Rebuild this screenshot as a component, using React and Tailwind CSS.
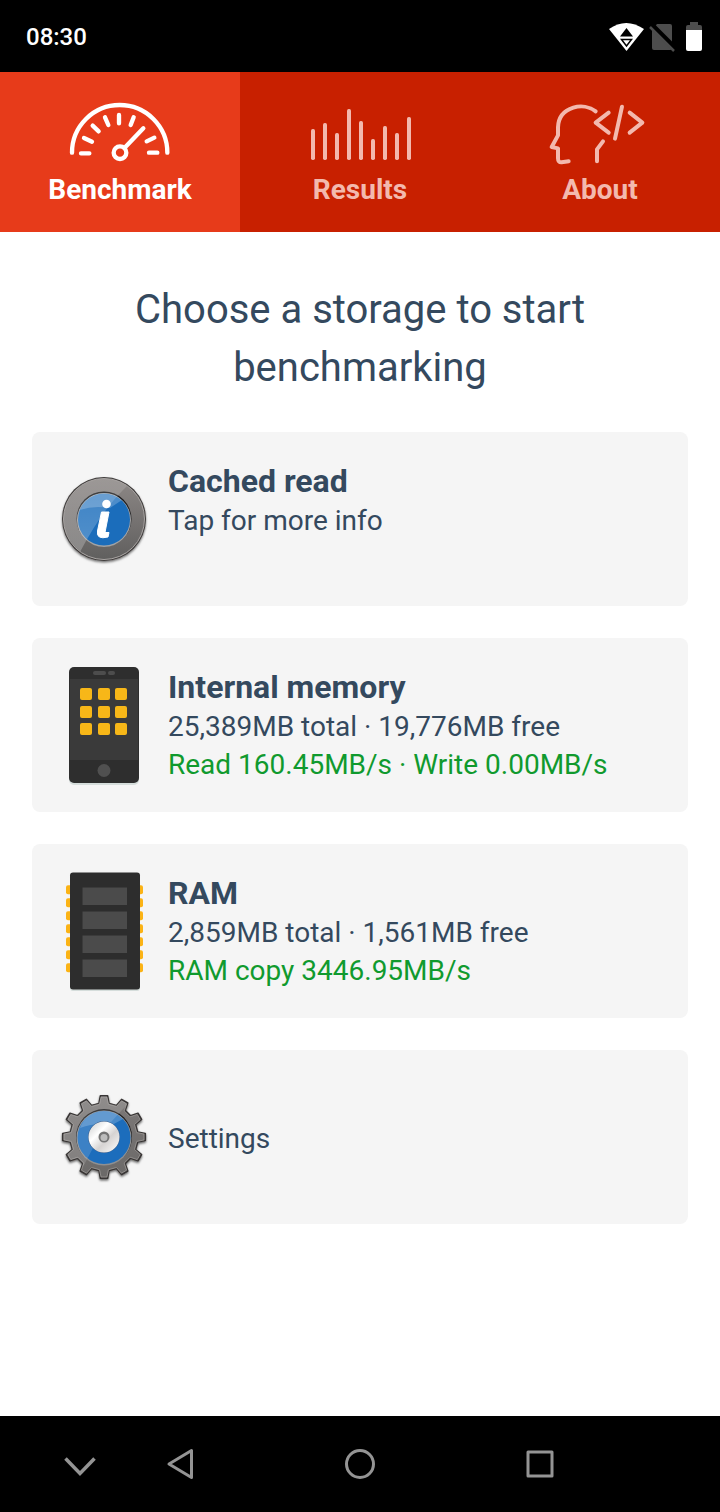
import React, { useState } from 'react';

const tabs = [
  { id: 'benchmark', label: 'Benchmark', icon: GaugeIcon },
  { id: 'results', label: 'Results', icon: BarsIcon },
  { id: 'about', label: 'About', icon: HeadIcon },
];

const storages = [
  { title: 'Cached read', info: 'Tap for more info', icon: InfoIcon },
  {
    title: 'Internal memory',
    info: '25,389MB total · 19,776MB free',
    result: 'Read 160.45MB/s · Write 0.00MB/s',
    icon: PhoneIcon,
  },
  {
    title: 'RAM',
    info: '2,859MB total · 1,561MB free',
    result: 'RAM copy 3446.95MB/s',
    icon: ChipIcon,
  },
];

const barTops = [117, 99, 129, 57, 93, 147, 108, 129, 81];

function GaugeIcon() {
  return (
    <svg viewBox="0 0 420 228" className="h-[76px] w-[140px]" fill="none" stroke="currentColor" strokeWidth="13" strokeLinecap="round" aria-hidden="true">
      <path d="M66 188A143 143 0 0 1 352 188" />
      <circle cx="210" cy="188" r="19" />
      <path d="M224 173L280 115" />
      <path d="M93 190H118M102 144L126 155M128 107L146 124M165 82L175 105M207 75V100M251 82L242 105M313 143L290 154M297 188H322" />
    </svg>
  );
}

function BarsIcon() {
  return (
    <svg viewBox="0 0 420 228" className="h-[76px] w-[140px]" fill="currentColor" aria-hidden="true">
      {barTops.map((top, index) => (
        <rect key={index} x={63 + index * 36} y={top} width="12" height={210 - top} rx="5" />
      ))}
    </svg>
  );
}

function HeadIcon() {
  return (
    <svg viewBox="0 0 420 228" className="h-[76px] w-[140px]" fill="none" stroke="currentColor" strokeWidth="12" strokeLinecap="round" strokeLinejoin="round" aria-hidden="true">
      <path d="M197 64C179 50 153 46 130 53C101 62 85 84 84 112V136L65 171L84 175V205Q84 218 95 217L116 214" />
      <path d="M219 154L201 178V214" />
      <path d="M236 68L197 98L236 128M276 50L255 146M299 68L337 98L299 128" />
    </svg>
  );
}

function InfoIcon() {
  return (
    <svg viewBox="0 0 120 120" className="size-[120px]" aria-hidden="true">
      <defs>
        <linearGradient id="infoRing" x1="0" y1="0" x2="0" y2="1">
          <stop offset="0" stopColor="#8d8886" />
          <stop offset="1" stopColor="#605f5e" />
        </linearGradient>
        <linearGradient id="infoShine" x1="0" y1="0" x2="0" y2="1">
          <stop offset="0" stopColor="#fff" stopOpacity="0.12" />
          <stop offset="1" stopColor="#fff" stopOpacity="0.26" />
        </linearGradient>
        <clipPath id="infoClip">
          <circle cx="60" cy="60" r="40" />
        </clipPath>
        <filter id="infoShadow" x="-20%" y="-20%" width="140%" height="140%">
          <feDropShadow dx="0" dy="1.5" stdDeviation="1.3" floodOpacity="0.55" />
        </filter>
      </defs>
      <circle cx="60" cy="60" r="42" fill="#403d3c" filter="url(#infoShadow)" />
      <circle cx="60" cy="60" r="40.5" fill="url(#infoRing)" stroke="#aaa6a4" strokeWidth="1" />
      <circle cx="60" cy="60" r="27.5" fill="#1b1b1d" />
      <circle cx="60" cy="61" r="27" fill="#a3a3a4" />
      <circle cx="60" cy="60.5" r="26" fill="#1b6dbb" />
      <path d="M10 10H100L79 31Q57 53 36 93L10 100Z" fill="url(#infoShine)" clipPath="url(#infoClip)" />
      <path d="M36 51Q42 35 60 34Q71 34 78 41L66 49Q50 46 36 51Z" fill="#fff" fillOpacity="0.22" />
      <circle cx="62.5" cy="45" r="4.3" fill="#fff" />
      <path d="M57.5 53H65L61 73.5H65L64 78Q52 81 53.5 72Z" fill="#fff" stroke="#fff" strokeWidth="1" strokeLinejoin="round" />
    </svg>
  );
}

function PhoneIcon() {
  return (
    <svg viewBox="0 0 120 120" className="size-[120px]" aria-hidden="true">
      <rect x="25" y="4" width="70" height="116" rx="5" fill="#d5dddb" />
      <rect x="25" y="2" width="70" height="116" rx="5" fill="#2e2e2e" />
      <rect x="26" y="14" width="68" height="81" fill="#3a3a3a" />
      <rect x="49" y="6" width="13" height="4" rx="2" fill="#4d4d4d" />
      <rect x="64" y="6" width="7" height="4" rx="2" fill="#4d4d4d" />
      {[23, 41, 58].map((y) =>
        [36, 54, 71].map((x) => (
          <rect key={`${x}-${y}`} x={x} y={y} width="12" height="12" rx="2" fill="#f7b718" />
        ))
      )}
      <circle cx="60" cy="105.5" r="6.5" fill="#505050" />
    </svg>
  );
}

function ChipIcon() {
  return (
    <svg viewBox="0 0 120 120" className="size-[120px]" aria-hidden="true">
      {[0, 1, 2, 3, 4, 5, 6].map((pin) => (
        <g key={pin} fill="#fbb315">
          <rect x="22" y={14.3 + pin * 13} width="8" height="9" rx="2" />
          <rect x="91" y={14.3 + pin * 13} width="8" height="9" rx="2" />
        </g>
      ))}
      <rect x="26" y="3.5" width="70" height="116.5" rx="3" fill="#d5dddb" />
      <rect x="26" y="1.5" width="70" height="117" rx="3" fill="#2d2d2d" />
      {[16.5, 40.5, 64.5, 88.5].map((y) => (
        <rect key={y} x="38.5" y={y} width="44.5" height="17.5" fill="#4b4b4b" />
      ))}
    </svg>
  );
}

// outline of a cog with 12 teeth centred in a 120 x 120 box
function cogPath(outer, root, tipHalf, rootHalf) {
  const points = [];
  for (let tooth = 0; tooth < 12; tooth++) {
    const angle = tooth * 30 - 90;
    [
      [root, -rootHalf],
      [outer, -tipHalf],
      [outer, tipHalf],
      [root, rootHalf],
    ].forEach(([radius, offset]) => {
      const rad = ((angle + offset) * Math.PI) / 180;
      points.push(`${(60 + radius * Math.cos(rad)).toFixed(2)} ${(60 + radius * Math.sin(rad)).toFixed(2)}`);
    });
  }
  return `M${points.join('L')}Z`;
}

function CogIcon() {
  return (
    <svg viewBox="0 0 120 120" className="size-[120px]" aria-hidden="true">
      <defs>
        <linearGradient id="cogMetal" x1="0" y1="0" x2="0" y2="1">
          <stop offset="0" stopColor="#7d7978" />
          <stop offset="1" stopColor="#6b6968" />
        </linearGradient>
        <linearGradient id="cogHub" x1="0" y1="0" x2="1" y2="1">
          <stop offset="0" stopColor="#c9c9c9" />
          <stop offset="0.35" stopColor="#fff" />
          <stop offset="0.6" stopColor="#d6d3d2" />
          <stop offset="1" stopColor="#fff" />
        </linearGradient>
        <clipPath id="cogClip">
          <path d={cogPath(40.5, 34, 4.2, 8)} />
        </clipPath>
        <filter id="cogShadow" x="-20%" y="-20%" width="140%" height="140%">
          <feDropShadow dx="0" dy="1.5" stdDeviation="1.2" floodOpacity="0.6" />
        </filter>
      </defs>
      <path d={cogPath(41.5, 34, 5, 8.5)} fill="#393635" stroke="#393635" strokeWidth="1.5" strokeLinejoin="round" filter="url(#cogShadow)" />
      <path d={cogPath(40.2, 33, 4.2, 7.8)} fill="url(#cogMetal)" stroke="#a19d9b" strokeWidth="0.8" strokeLinejoin="round" />
      <circle cx="60" cy="60" r="28" fill="#1a1a1c" />
      <circle cx="60" cy="61" r="27.5" fill="#8f9092" />
      <circle cx="60" cy="60.5" r="26.5" fill="#1c6dbc" />
      <path d="M15 15H96L78 33Q56 55 40 88L15 100Z" fill="#fff" fillOpacity="0.14" clipPath="url(#cogClip)" />
      <path d="M36 51Q42 35 60 34Q72 34 79 42L68 48Q52 45 36 51Z" fill="#fff" fillOpacity="0.2" />
      <circle cx="60" cy="60" r="16" fill="#31598a" />
      <circle cx="60" cy="60" r="15.5" fill="url(#cogHub)" />
      <circle cx="60" cy="60" r="5.5" fill="#747474" />
      <circle cx="60" cy="60.5" r="3.5" fill="#bcbcbc" />
    </svg>
  );
}

function StatusBar() {
  return (
    <header className="flex h-[72px] items-center justify-between bg-black pt-px pr-4 pl-[26px] text-white">
      <span className="text-2xl font-medium">08:30</span>
      <div className="flex gap-1">
        <svg viewBox="0 0 36 32" className="h-8 w-9" aria-hidden="true">
          <path d="M1 8Q18 -4 36 8L18.5 30Z" fill="#fff" />
          <path d="M18.5 7L25 15.5H12Z" fill="#000" />
          <path d="M13.5 18.5H23.5L18.5 25Z" fill="#fff" stroke="#000" strokeWidth="1.5" />
        </svg>
        <svg viewBox="0 0 32 32" className="size-8" aria-hidden="true">
          <path d="M4 9L9 3H22Q24 3 24 5V27Q24 29 22 29H6Q4 29 4 27Z" fill="#4d4d4d" />
          <path d="M4 4L28 28" stroke="#000" strokeWidth="5" />
          <path d="M2 6L26 30" stroke="#4d4d4d" strokeWidth="2.5" />
        </svg>
        <svg viewBox="0 0 20 32" className="h-8 w-5" aria-hidden="true">
          <path d="M6 1H14V4H16Q18 4 18 6V10H2V6Q2 4 4 4H6Z" fill="#4d4d4d" />
          <path d="M2 9H18V28Q18 30 16 30H4Q2 30 2 28Z" fill="#fff" />
        </svg>
      </div>
    </header>
  );
}

function SystemNav() {
  return (
    <footer className="grid h-24 grid-cols-[11fr_14fr_22fr_14fr_11fr] bg-black text-[#949494]">
      <button aria-label="Hide" className="flex items-center justify-center pl-[50px]">
        <svg viewBox="0 0 40 40" className="size-10" fill="none" stroke="currentColor" strokeWidth="3.5" aria-hidden="true">
          <path d="M5.5 14.5L20 29.5L34.5 14.5" />
        </svg>
      </button>
      <button aria-label="Back" className="flex items-center justify-center">
        <svg viewBox="0 0 40 40" className="size-10" fill="none" stroke="currentColor" strokeWidth="3" strokeLinejoin="round" aria-hidden="true">
          <path d="M31.5 6.5V33.5L9 20Z" />
        </svg>
      </button>
      <button aria-label="Home" className="flex items-center justify-center">
        <svg viewBox="0 0 40 40" className="size-10" fill="none" stroke="currentColor" strokeWidth="3" aria-hidden="true">
          <circle cx="20" cy="20" r="13.5" />
        </svg>
      </button>
      <button aria-label="Recent apps" className="flex items-center justify-center">
        <svg viewBox="0 0 40 40" className="size-10" fill="none" stroke="currentColor" strokeWidth="3" strokeLinejoin="round" aria-hidden="true">
          <rect x="8" y="8" width="24" height="24" />
        </svg>
      </button>
    </footer>
  );
}

function App() {
  const [activeTab, setActiveTab] = useState('benchmark');

  return (
    <div className="flex min-h-screen flex-col bg-white font-['Roboto',sans-serif] text-[#34495e]">
      <StatusBar />

      {/* Tabs */}
      <nav className="grid h-40 grid-cols-3 bg-[#c82000]">
        {tabs.map(({ id, label, icon: Icon }) => (
          <button
            key={id}
            onClick={() => setActiveTab(id)}
            className={`flex flex-col items-center gap-2 pt-[18px] ${
              activeTab === id ? 'bg-[#e73b1a] text-white' : 'text-[#f3b9ae]'
            }`}
          >
            <Icon />
            <span className="text-[28px] leading-8 font-bold">{label}</span>
          </button>
        ))}
      </nav>

      {/* Storage list */}
      <main className="flex-1 px-8 pt-[49px] pb-8">
        <h1 className="px-16 text-center text-[40px] leading-[58px]">
          Choose a storage to start benchmarking
        </h1>
        <div className="mt-[35px] flex flex-col gap-8">
          {storages.map(({ title, info, result, icon: Icon }) => (
            <button key={title} className="flex min-h-[174px] items-center gap-1 rounded-lg bg-[#f5f5f5] pl-3 text-left">
              <Icon />
              <div className="flex-1 self-start pt-7 text-[28px] leading-[38px]">
                <h2 className="text-[32px] leading-[42px] font-bold">{title}</h2>
                <p>{info}</p>
                {result && <p className="text-[#109a2e]">{result}</p>}
              </div>
            </button>
          ))}
          <button className="flex min-h-[174px] items-center gap-1 rounded-lg bg-[#f5f5f5] pl-3 text-left">
            <CogIcon />
            <span className="pt-1 text-[28px] leading-[38px]">Settings</span>
          </button>
        </div>
      </main>

      <SystemNav />
    </div>
  );
}

export default App;
